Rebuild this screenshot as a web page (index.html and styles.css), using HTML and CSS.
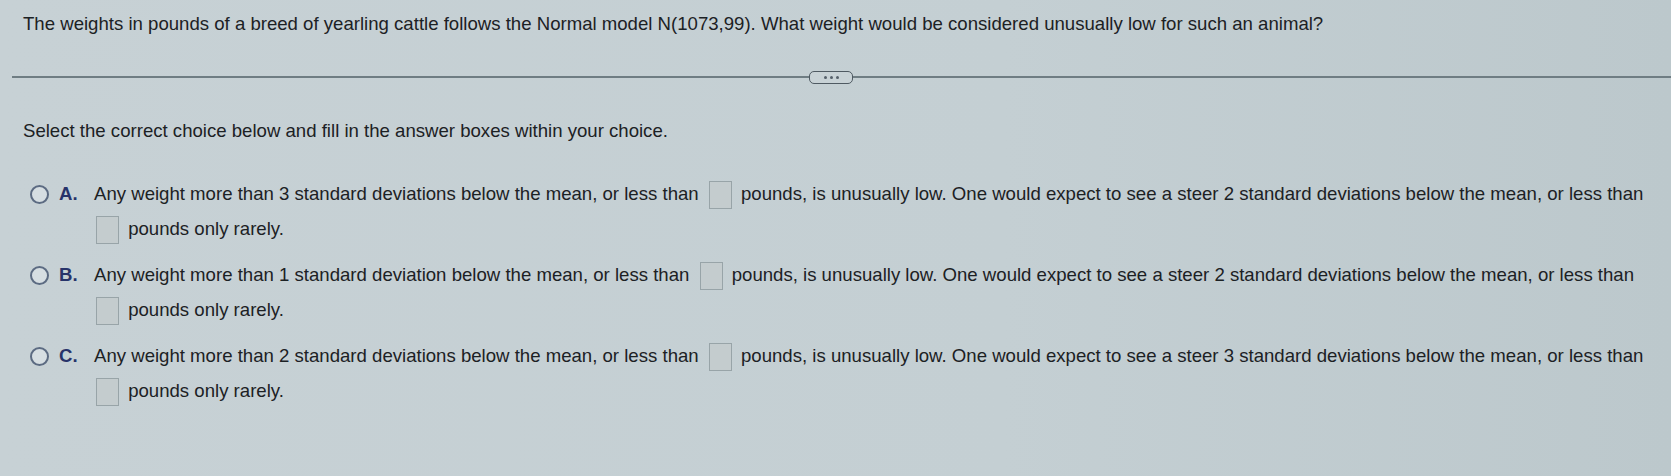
FILE: index.html
```html
<!DOCTYPE html>
<html>
<head>
<meta charset="utf-8">
<link rel="stylesheet" href="styles.css">
</head>
<body>
<div class="page">
  <p class="question">The weights in pounds of a breed of yearling cattle follows the Normal model N(1073,99). What weight would be considered unusually low for such an animal?</p>
  <div class="divider">
    <div class="rule"></div>
    <div class="pill"><span></span><span></span><span></span></div>
    <div class="rule"></div>
  </div>
  <p class="instruction">Select the correct choice below and fill in the answer boxes within your choice.</p>
  <div class="options">
    <div class="option">
      <span class="radio"></span>
      <span class="letter">A.</span>
      <div class="text">Any weight more than 3 standard deviations below the mean, or less than <span class="box"></span> pounds, is unusually low. One would expect to see a steer 2 standard deviations below the mean, or less than<br><span class="box"></span> pounds only rarely.</div>
    </div>
    <div class="option">
      <span class="radio"></span>
      <span class="letter">B.</span>
      <div class="text">Any weight more than 1 standard deviation below the mean, or less than <span class="box"></span> pounds, is unusually low. One would expect to see a steer 2 standard deviations below the mean, or less than<br><span class="box"></span> pounds only rarely.</div>
    </div>
    <div class="option">
      <span class="radio"></span>
      <span class="letter">C.</span>
      <div class="text">Any weight more than 2 standard deviations below the mean, or less than <span class="box"></span> pounds, is unusually low. One would expect to see a steer 3 standard deviations below the mean, or less than<br><span class="box"></span> pounds only rarely.</div>
    </div>
  </div>
</div>
</body>
</html>
```

FILE: styles.css
```css
html, body {
  margin: 0;
  padding: 0;
  background: #c5d0d4;
}
.page {
  width: 1671px;
  height: 476px;
  overflow: hidden;
  background: linear-gradient(90deg, #c7d1d5 0%, #c4cfd3 60%, #bcc8cc 100%);
  font-family: "Liberation Sans", Arial, sans-serif;
  color: #1c2124;
  font-size: 18.6px;
}
.question {
  margin: 0;
  padding: 13px 0 0 23px;
  line-height: 22px;
  white-space: nowrap;
}
.divider {
  display: flex;
  align-items: center;
  margin: 35px 0 0 12px;
  height: 14px;
}
.rule {
  flex: 1;
  height: 2px;
  background: #6f7d83;
}
.divider .rule:first-child {
  flex: 0 0 797px;
}
.pill {
  width: 42px;
  height: 11px;
  border: 1.5px solid #4f5a62;
  border-radius: 5px;
  display: flex;
  justify-content: center;
  align-items: center;
  gap: 3px;
  background: #c8d2d6;
}
.pill span {
  width: 3px;
  height: 3px;
  border-radius: 50%;
  background: #55606a;
}
.instruction {
  margin: 36px 0 0 23px;
  line-height: 22px;
}
.options {
  margin-top: 36px;
  padding-left: 30px;
}
.option {
  display: flex;
  align-items: flex-start;
  margin-bottom: 13px;
}
.radio {
  flex: 0 0 auto;
  width: 15px;
  height: 15px;
  border: 2px solid #5c6b82;
  border-radius: 50%;
  background: #d6dee2;
  margin-top: 7px;
}
.letter {
  font-weight: bold;
  color: #27336a;
  width: 35px;
  margin-left: 10px;
  line-height: 32px;
}
.text {
  line-height: 35px;
  white-space: nowrap;
  margin-top: -2px;
}
.box {
  display: inline-block;
  width: 21px;
  height: 26px;
  border: 1px solid #98a4a8;
  background: #c4ccce;
  vertical-align: middle;
  margin: 0 4px 0 5px;
}
.text br + .box {
  margin-left: 2px;
}
```
